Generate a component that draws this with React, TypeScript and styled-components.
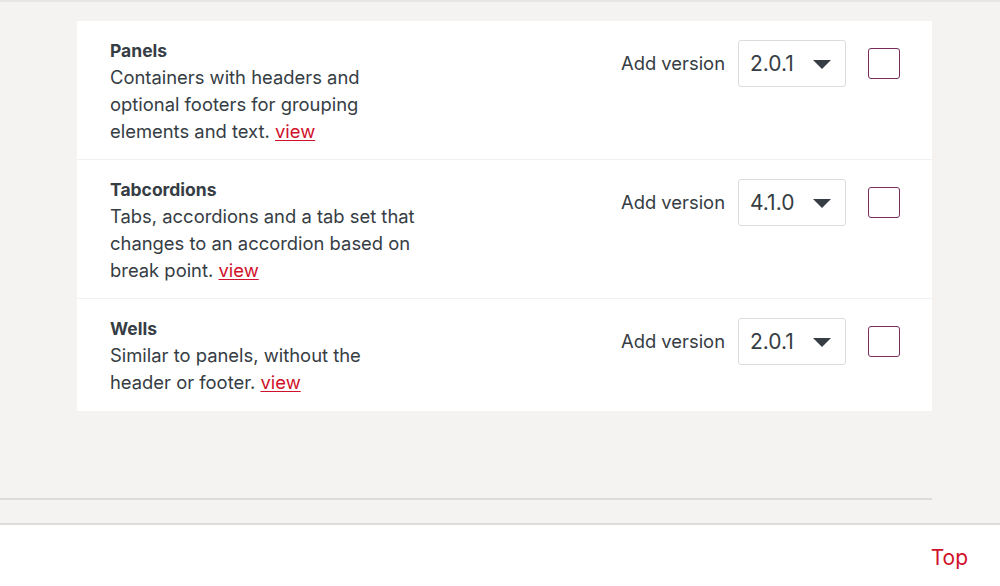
import React from "react";
import styled, { createGlobalStyle } from "styled-components";

const Global = createGlobalStyle`
  html, body { margin: 0; padding: 0; }
  body {
    background: #f4f3f1;
    font-family: Inter, "Noto Sans", "Liberation Sans", sans-serif;
    color: #363d44;
    -webkit-font-smoothing: antialiased;
  }
`;

const Page = styled.div`
  width: 1000px;
  height: 586px;
  display: flex;
  flex-direction: column;
  border-top: 2px solid #e7e6e4;
  box-sizing: border-box;
  overflow: hidden;
`;

const Main = styled.main`
  flex: 1;
  display: flex;
  flex-direction: column;
  padding-top: 19px;
`;

const Card = styled.section`
  margin-left: 77px;
  width: 855px;
  background: #fff;
  display: flex;
  flex-direction: column;
`;

const Row = styled.div`
  display: flex;
  justify-content: space-between;
  align-items: flex-start;
  padding: 16px 32px 14px 33px;
  border-bottom: 1px solid #f0f2f4;
  &:last-child { border-bottom: none; padding-bottom: 15px; }
`;

const Info = styled.div`
  font-size: 18.4px;
  line-height: 27px;
  white-space: nowrap;
`;

const Title = styled.div`
  font-weight: 700;
  font-size: 17.5px;
`;

const Desc = styled.div``;

const ViewLink = styled.a`
  color: #d0112b;
  text-decoration: underline;
  text-underline-offset: 2px;
`;

const Controls = styled.div`
  display: flex;
  align-items: center;
  margin-top: 3px;
`;

const Label = styled.span`
  font-size: 18.4px;
  margin-right: 13px;
  margin-top: -2px;
`;

const Select = styled.div`
  box-sizing: border-box;
  width: 108px;
  height: 47px;
  border: 1px solid #dcdcdc;
  border-radius: 3px;
  display: flex;
  align-items: center;
  justify-content: space-between;
  padding: 0 14px 0 11px;
  font-size: 21px;
  color: #363d44;
  background: #fff;
`;

const Arrow = styled.span`
  width: 0;
  height: 0;
  border-left: 9.5px solid transparent;
  border-right: 9.5px solid transparent;
  border-top: 9px solid #363d44;
  margin-top: 2px;
`;

const Check = styled.span`
  box-sizing: border-box;
  width: 32px;
  height: 31px;
  margin-left: 22px;
  border: 1.5px solid #7a2c5c;
  border-radius: 3px;
  background: #fff;
`;

const Rule = styled.hr`
  margin: 87px 0 0 0;
  width: 932px;
  border: none;
  border-top: 2px solid #dcdbd9;
`;

const Footer = styled.footer`
  height: 63px;
  background: #fff;
  border-top: 2px solid #dddcda;
  box-sizing: border-box;
  display: flex;
  justify-content: flex-end;
  align-items: center;
  padding-right: 32px;
`;

const TopLink = styled.a`
  color: #d0112b;
  font-size: 21px;
  text-decoration: none;
  margin-top: 3px;
`;

type Item = { title: string; lines: string[]; version: string };

const items: Item[] = [
  {
    title: "Panels",
    lines: ["Containers with headers and", "optional footers for grouping", "elements and text."],
    version: "2.0.1",
  },
  {
    title: "Tabcordions",
    lines: ["Tabs, accordions and a tab set that", "changes to an accordion based on", "break point."],
    version: "4.1.0",
  },
  {
    title: "Wells",
    lines: ["Similar to panels, without the", "header or footer."],
    version: "2.0.1",
  },
];

export default function App() {
  return (
    <>
      <Global />
      <Page>
        <Main>
          <Card>
            {items.map((it) => (
              <Row key={it.title}>
                <Info>
                  <Title>{it.title}</Title>
                  {it.lines.map((l, i) => (
                    <Desc key={i}>
                      {l}
                      {i === it.lines.length - 1 && (
                        <>
                          {" "}
                          <ViewLink href="#">view</ViewLink>
                        </>
                      )}
                    </Desc>
                  ))}
                </Info>
                <Controls>
                  <Label>Add version</Label>
                  <Select>
                    <span>{it.version}</span>
                    <Arrow />
                  </Select>
                  <Check />
                </Controls>
              </Row>
            ))}
          </Card>
          <Rule />
        </Main>
        <Footer>
          <TopLink href="#">Top</TopLink>
        </Footer>
      </Page>
    </>
  );
}
